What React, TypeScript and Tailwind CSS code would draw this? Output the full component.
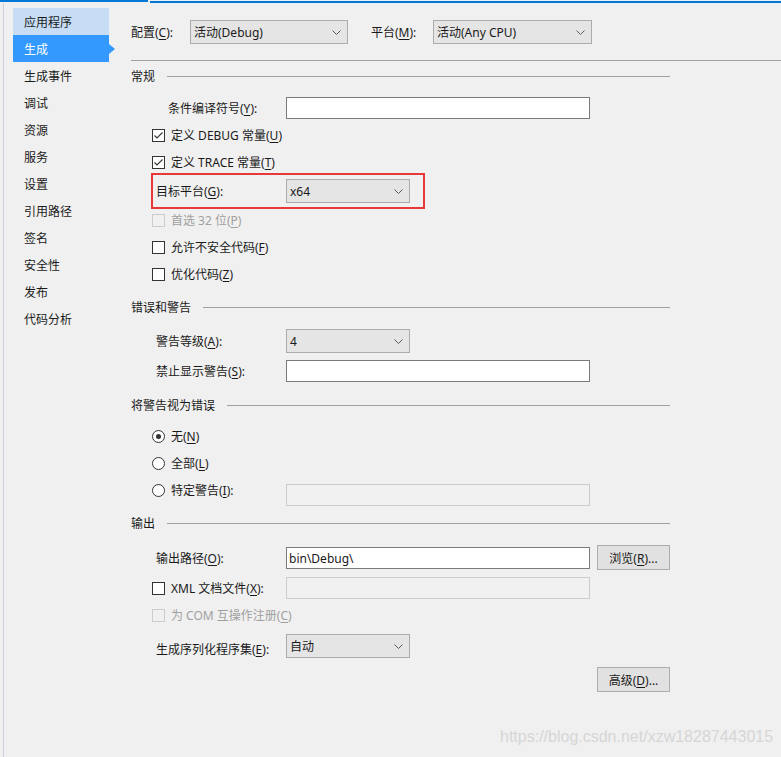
import React from 'react';

const NAV = ['应用程序', '生成', '生成事件', '调试', '资源', '服务', '设置', '引用路径', '签名', '安全性', '发布', '代码分析'];

// access key letter, underlined like a WinForms label
function K({ c }: { c: string }) {
  return <span className="underline underline-offset-2">{c}</span>;
}

function Chevron() {
  return (
    <svg width="9" height="5" viewBox="0 0 9 5" className="shrink-0">
      <path d="M0.5 0.5 L4.5 4.5 L8.5 0.5" fill="none" stroke="#5a5a5a" strokeWidth="1" />
    </svg>
  );
}

function Dropdown({ value, className }: { value: string; className: string }) {
  return (
    <div className={`h-[24px] bg-[#e5e5e5] border border-[#acacac] flex items-center justify-between pl-[3px] pr-[6px] ${className}`}>
      <span className="pt-[2px]">{value}</span>
      <Chevron />
    </div>
  );
}

function TextBox({ value = '', disabled = false }: { value?: string; disabled?: boolean }) {
  return (
    <div
      className={`w-[304px] h-[22px] flex items-center px-[2px] border ${
        disabled ? 'bg-[#f0f0f0] border-[#cccccc]' : 'bg-white border-[#7a7a7a]'
      }`}
    >
      <span className="pt-[2px]">{value}</span>
    </div>
  );
}

function Button({ children }: { children: React.ReactNode }) {
  return (
    <div className="w-[73px] h-[25px] bg-[#e1e1e1] border border-[#adadad] flex items-center justify-center">
      <span className="pt-[2px]">{children}</span>
    </div>
  );
}

function CheckBox({ checked = false, disabled = false }: { checked?: boolean; disabled?: boolean }) {
  return (
    <div
      className={`w-[13px] h-[13px] shrink-0 border flex items-center justify-center ${
        disabled ? 'border-[#cccccc] bg-[#f0f0f0]' : 'border-[#333333] bg-white'
      }`}
    >
      {checked && (
        <svg width="11" height="11" viewBox="0 0 11 11">
          <path d="M1.5 5.5 L4 8 L9.5 2.5" fill="none" stroke="#333333" strokeWidth="1.1" />
        </svg>
      )}
    </div>
  );
}

function Radio({ checked = false }: { checked?: boolean }) {
  return (
    <div className="w-[13px] h-[13px] shrink-0 rounded-full border border-[#333333] bg-white flex items-center justify-center">
      {checked && <div className="w-[5px] h-[5px] rounded-full bg-[#333333]" />}
    </div>
  );
}

function CheckRow({ children, checked, disabled, className = '' }: { children: React.ReactNode; checked?: boolean; disabled?: boolean; className?: string }) {
  return (
    <div className={`h-[22px] pl-[21px] flex items-center gap-[6px] ${disabled ? 'text-[#a0a0a0]' : ''} ${className}`}>
      <CheckBox checked={checked} disabled={disabled} />
      <span className="pt-[2px]">{children}</span>
    </div>
  );
}

function Section({ title, className = '' }: { title: string; className?: string }) {
  return (
    <div className={`w-[539px] h-[16px] flex items-center ${className}`}>
      <span className="pt-[2px]">{title}</span>
      <div className="ml-3 flex-1 h-px bg-[#a0a0a0]" />
    </div>
  );
}

export default function App() {
  return (
    <div className="relative w-[781px] h-[757px] overflow-hidden bg-[#f0f0f0] text-[12px] leading-none text-[#1a1a1a] font-['Noto_Sans','Noto_Sans_CJK_SC',sans-serif]">
      {/* top accent */}
      <div className="flex items-start h-[3px]">
        <div className="w-[148px] h-[2px] bg-[#0078d7]" />
        <div className="ml-[2px] mt-[1px] flex-1 h-[2px] bg-[#0078d7]" />
      </div>

      <div className="flex h-[754px]">
        {/* sidebar */}
        <div className="w-[116px] shrink-0 ml-[3px] border-l border-[#cfd0dc] pl-[9px] pt-[5px]">
          {NAV.map((n, i) => (
            <div
              key={n}
              className={`relative w-[96px] h-[27px] pl-[11px] flex items-center ${
                i === 0 ? 'bg-[#c7ddf5]' : i === 1 ? 'bg-[#3399ff] text-white' : ''
              }`}
            >
              <span className="pt-[2px]">{n}</span>
              {i === 1 && (
                <div className="absolute right-[-6px] top-[9px] w-0 h-0 border-y-[5px] border-y-transparent border-l-[6px] border-l-[#3399ff]" />
              )}
            </div>
          ))}
        </div>

        {/* main */}
        <div className="flex-1 pl-[12px] pt-[17px]">
          <div className="h-[24px] flex items-center">
            <span className="w-[59px] pt-[2px]">配置(<K c="C" />):</span>
            <Dropdown value="活动(Debug)" className="w-[158px]" />
            <span className="ml-[23px] w-[62px] pt-[2px]">平台(<K c="M" />):</span>
            <Dropdown value="活动(Any CPU)" className="w-[159px]" />
          </div>
          <div className="mt-[16px] h-px bg-[#a0a0a0]" />

          <Section title="常规" className="mt-[7px]" />
          <div className="mt-[13px] h-[22px] flex items-center">
            <span className="pl-[37px] w-[155px] pt-[2px]">条件编译符号(<K c="Y" />):</span>
            <TextBox />
          </div>
          <CheckRow checked className="mt-[5px]">定义 DEBUG 常量(<K c="U" />)</CheckRow>
          <CheckRow checked className="mt-[5px]">定义 TRACE 常量(<K c="T" />)</CheckRow>
          <div className="ml-[20px] w-[274px] h-[36px] border-2 border-[#e8393a] flex items-center pl-[3px]">
            <span className="w-[130px] pt-[2px]">目标平台(<K c="G" />):</span>
            <Dropdown value="x64" className="w-[124px]" />
          </div>
          <CheckRow disabled>首选 32 位(<K c="P" />)</CheckRow>
          <CheckRow className="mt-[5px]">允许不安全代码(<K c="F" />)</CheckRow>
          <CheckRow className="mt-[5px]">优化代码(<K c="Z" />)</CheckRow>

          <Section title="错误和警告" className="mt-[14px]" />
          <div className="mt-[14px] h-[24px] flex items-center pl-[25px]">
            <span className="w-[130px] pt-[2px]">警告等级(<K c="A" />):</span>
            <Dropdown value="4" className="w-[124px]" />
          </div>
          <div className="mt-[7px] h-[22px] flex items-center pl-[25px]">
            <span className="w-[130px] pt-[2px]">禁止显示警告(<K c="S" />):</span>
            <TextBox />
          </div>

          <Section title="将警告视为错误" className="mt-[15px]" />
          <div className="mt-[12px] h-[22px] pl-[21px] flex items-center gap-[6px]">
            <Radio checked />
            <span className="pt-[2px]">无(<K c="N" />)</span>
          </div>
          <div className="mt-[5px] h-[22px] pl-[21px] flex items-center gap-[6px]">
            <Radio />
            <span className="pt-[2px]">全部(<K c="L" />)</span>
          </div>
          <div className="mt-[10px] h-[22px] pl-[21px] flex items-center">
            <div className="w-[134px] flex items-center gap-[6px] mb-[10px]">
              <Radio />
              <span className="pt-[2px]">特定警告(<K c="I" />):</span>
            </div>
            <TextBox disabled />
          </div>

          <Section title="输出" className="mt-[9px]" />
          <div className="mt-[14px] h-[25px] flex items-center pl-[25px]">
            <span className="w-[130px] pt-[2px]">输出路径(<K c="O" />):</span>
            <TextBox value="bin\Debug\" />
            <div className="ml-[7px]">
              <Button>浏览(<K c="R" />)...</Button>
            </div>
          </div>
          <div className="mt-[7px] h-[22px] pl-[21px] flex items-center">
            <div className="w-[134px] flex items-center gap-[6px]">
              <CheckBox />
              <span className="pt-[2px]">XML 文档文件(<K c="X" />):</span>
            </div>
            <TextBox disabled />
          </div>
          <CheckRow disabled className="mt-[5px]">为 COM 互操作注册(<K c="C" />)</CheckRow>
          <div className="mt-[8px] h-[24px] flex items-center pl-[25px]">
            <span className="w-[130px] pt-[8px]">生成序列化程序集(<K c="E" />):</span>
            <Dropdown value="自动" className="w-[124px]" />
          </div>
          <div className="mt-[9px] pl-[466px]">
            <Button>高级(<K c="D" />)...</Button>
          </div>
        </div>
      </div>

      {/* csdn watermark */}
      <div className="absolute left-[500px] top-[729px] text-[16px] text-[#d6d6d6] font-['Liberation_Sans',Arial,sans-serif]">
        https://blog.csdn.net/xzw18287443015
      </div>
    </div>
  );
}
